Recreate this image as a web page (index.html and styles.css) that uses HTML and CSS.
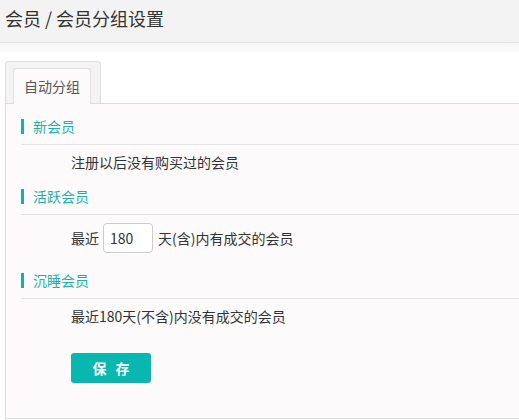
FILE: index.html
```html
<!DOCTYPE html>
<html lang="zh">
<head>
<meta charset="utf-8">
<title>会员分组设置</title>
<link rel="stylesheet" href="styles.css">
</head>
<body>
<header class="page-header">
  <h1 class="page-title">会员 / 会员分组设置</h1>
</header>
<main class="page-main">
  <div class="tabs">
    <div class="tab-wrap">
      <div class="tab active">自动分组</div>
    </div>
  </div>
  <section class="panel">
    <div class="group-title first"><span>新会员</span></div>
    <div class="group-row">注册以后没有购买过的会员</div>

    <div class="group-title"><span>活跃会员</span></div>
    <div class="group-row form-row">
      <span>最近</span>
      <input class="days-input" type="text" value="180">
      <span>天(含)内有成交的会员</span>
    </div>

    <div class="group-title"><span>沉睡会员</span></div>
    <div class="group-row">最近180天(不含)内没有成交的会员</div>

    <div class="actions">
      <button class="btn-save" type="button">保 存</button>
    </div>
  </section>
</main>
</body>
</html>
```

FILE: styles.css
```css
* { box-sizing: border-box; }

html, body {
  margin: 0;
  padding: 0;
  background: #fff;
  overflow: hidden;
}

body {
  font-family: "Noto Sans CJK SC", "Noto Sans", sans-serif;
  font-size: 14px;
  color: #333;
}

.page-header {
  height: 43px;
  background: #f3f3f3;
  border-bottom: 1px solid #e6e6e6;
  padding: 0 5px;
}

.page-title {
  margin: 0;
  font-size: 18px;
  font-weight: normal;
  line-height: 37px;
  color: #333;
}

.page-main {
  background: linear-gradient(#f5f5f5, #ffffff 12px);
  padding: 18px 0 0 5px;
}

.tabs {
  display: flex;
}

.tab-wrap {
  width: 96px;
  height: 42px;
  background: #f3f3f3;
  border: 1px solid #dedede;
  border-bottom: 0;
  border-radius: 4px 4px 0 0;
  padding: 6px 0 0 7px;
}

.tab {
  width: 78px;
  height: 36px;
  background: #fcfafb;
  border: 1px solid #dedede;
  border-bottom: 0;
  border-radius: 3px 3px 0 0;
  color: #555;
  font-size: 14px;
  line-height: 34px;
  text-align: center;
}

.panel {
  background: #fcfafb;
  border: 1px solid #dcdcdc;
  border-right: 0;
  padding: 0 0 34px 15px;
  height: 316px;
}

.group-title {
  padding: 10px 0 10px;
  border-bottom: 1px solid #e3e3e3;
}

.group-title.first {
  padding-top: 15px;
}

.group-title span {
  display: block;
  border-left: 3px solid #0bb5ad;
  padding-left: 9px;
  line-height: 14px;
  height: 15px;
  color: #1ab3a8;
}

.group-row {
  padding-left: 50px;
  line-height: 34px;
  height: 34px;
}

.form-row {
  display: flex;
  align-items: center;
  height: 48px;
  padding-top: 8px;
  padding-bottom: 10px;
}

.days-input {
  width: 50px;
  height: 30px;
  margin: 0 5px 0 4px;
  border: 1px solid #cccccc;
  border-radius: 4px;
  background: #fff;
  padding: 0 6px;
  font-family: inherit;
  font-size: 14px;
  color: #333;
}

.actions {
  padding: 20px 0 0 50px;
}

.btn-save {
  width: 80px;
  height: 30px;
  border: 0;
  border-radius: 3px;
  background: #07b7b0;
  color: #fff;
  font-family: inherit;
  font-size: 14px;
  font-weight: bold;
  letter-spacing: 3px;
  padding: 0 0 0 3px;
  cursor: pointer;
}
```
